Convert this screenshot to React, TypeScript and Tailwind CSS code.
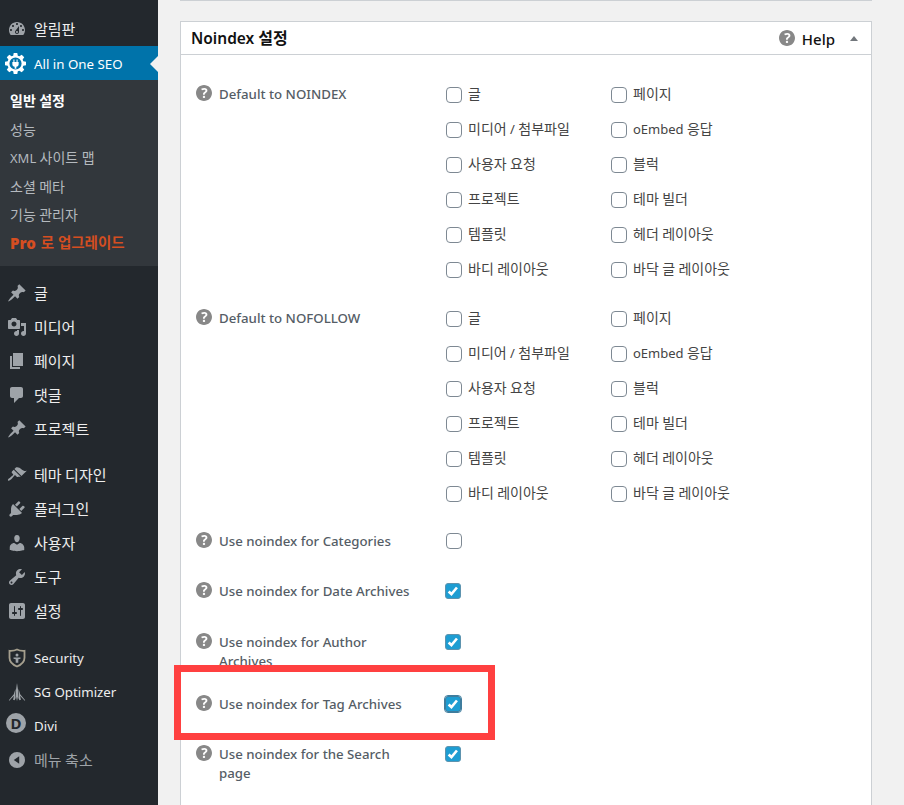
const font = "[font-family:'Noto_Sans','Noto_Sans_CJK_KR',sans-serif]";

const icons: Record<string, string> = {
  dashboard:
    "M3.76 16h12.48c1.1-1.37 1.76-3.11 1.76-5 0-4.42-3.58-8-8-8s-8 3.58-8 8c0 1.89.66 3.63 1.76 5zM10 4c.55 0 1 .45 1 1s-.45 1-1 1-1-.45-1-1 .45-1 1-1zM6 6c.55 0 1 .45 1 1s-.45 1-1 1-1-.45-1-1 .45-1 1-1zm8 0c.55 0 1 .45 1 1s-.45 1-1 1-1-.45-1-1 .45-1 1-1zm-5.37 5.55L12 7v6c0 1.1-.9 2-2 2s-2-.9-2-2c0-.57.24-1.08.63-1.45zM4 10c.55 0 1 .45 1 1s-.45 1-1 1-1-.45-1-1 .45-1 1-1zm12 0c.55 0 1 .45 1 1s-.45 1-1 1-1-.45-1-1 .45-1 1-1zm-5 3c0-.55-.45-1-1-1s-1 .45-1 1 .45 1 1 1 1-.45 1-1z",
  pin: "M10.44 3.02l1.82-1.82 6.36 6.35-1.83 1.82c-1.05-.68-2.48-.57-3.41.36l-.75.75c-.92.93-1.04 2.35-.35 3.41l-1.83 1.82-2.41-2.41-2.8 2.79c-.42.42-3.38 2.71-3.8 2.29s1.86-3.39 2.28-3.81l2.79-2.79L4.1 9.36l1.83-1.82c1.05.69 2.48.57 3.4-.36l.75-.75c.93-.92 1.05-2.35.36-3.41z",
  media:
    "M13 11V4c0-.55-.45-1-1-1h-1.67L9 1H5L3.67 3H2c-.55 0-1 .45-1 1v7c0 .55.45 1 1 1h10c.55 0 1-.45 1-1zM7 4.5c1.38 0 2.5 1.12 2.5 2.5S8.38 9.5 7 9.5 4.5 8.38 4.5 7 5.62 4.5 7 4.5zM14 6h5v10.5c0 1.38-1.12 2.5-2.5 2.5S14 17.88 14 16.5s1.12-2.5 2.5-2.5c.17 0 .34.02.5.05V9h-3V6zm-4 8.05V13h2v3.5c0 1.38-1.12 2.5-2.5 2.5S7 17.88 7 16.5 8.12 14 9.5 14c.17 0 .34.02.5.05z",
  page: "M6 15V2h10v13H6zm-1 1h8v2H3V5h2v11z",
  comments:
    "M5 2h9c1.1 0 2 .9 2 2v7c0 1.1-.9 2-2 2h-2l-5 5v-5H5c-1.1 0-2-.9-2-2V4c0-1.1.9-2 2-2z",
  brush:
    "M14.48 11.06L7.41 3.99l1.5-1.5c.5-.56 2.3-.47 3.51.32 1.21.8 1.43 1.28 2.91 2.1 1.18.64 2.45 1.26 4.45.85zm-.71.71L6.7 4.7 4.93 6.47c-.39.39-.39 1.02 0 1.41l1.06 1.06c.39.39.39 1.03 0 1.42-.6.6-1.43 1.11-2.21 1.69-.35.26-.7.53-1.01.84C1.43 13.23.4 14.84 1.1 15.54c.71.7 2.31-.33 3.65-1.67.31-.31.58-.66.85-1.02.57-.78 1.08-1.61 1.69-2.21.39-.39 1.02-.39 1.41 0l1.06 1.06c.39.39 1.02.39 1.41 0z",
  plugin:
    "M13.11 4.36L9.87 7.6 8 5.73l3.24-3.24c.35-.34 1.05-.2 1.56.32.52.51.66 1.21.31 1.55zm-8 1.77l.91-1.12 9.01 9.01-1.19.84c-.71.71-2.63 1.16-3.82 1.16H6.14L4.9 17.26c-.59.59-1.54.59-2.12 0-.59-.58-.59-1.53 0-2.12l1.24-1.24v-3.88c0-1.13.4-3.19 1.09-3.89zm7.26 3.97l3.24-3.24c.34-.35 1.04-.21 1.55.31.52.51.66 1.21.31 1.55l-3.24 3.25z",
  users:
    "M10 9.25c-2.27 0-2.73-3.44-2.73-3.44C7 4.02 7.82 2 9.97 2c2.16 0 2.98 2.02 2.71 3.81 0 0-.41 3.44-2.68 3.44zm0 2.57L12.72 10c2.39 0 4.52 2.33 4.52 4.53v2.49s-3.65 1.13-7.24 1.13c-3.65 0-7.24-1.13-7.24-1.13v-2.49c0-2.25 1.94-4.48 4.47-4.48z",
  tools:
    "M16.68 9.77c-1.34 1.34-3.3 1.67-4.95.99l-5.41 6.52c-.99.99-2.59.99-3.58 0s-.99-2.59 0-3.57l6.52-5.42c-.68-1.65-.35-3.61.99-4.95 1.28-1.28 3.12-1.62 4.72-1.06l-2.89 2.89 2.82 2.82 2.86-2.87c.53 1.58.18 3.39-1.08 4.65zM3.81 16.21c.4.39 1.04.39 1.43 0 .4-.4.4-1.04 0-1.43-.39-.4-1.03-.4-1.43 0-.39.39-.39 1.03 0 1.43z",
  settings:
    "M18 16V4c0-1.1-.9-2-2-2H4c-1.1 0-2 .9-2 2v12c0 1.1.9 2 2 2h12c1.1 0 2-.9 2-2zM8 11h1c.55 0 1 .45 1 1s-.45 1-1 1H8v1.5c0 .28-.22.5-.5.5s-.5-.22-.5-.5V13H6c-.55 0-1-.45-1-1s.45-1 1-1h1V5.5c0-.28.22-.5.5-.5s.5.22.5.5V11zm5-2h-1c-.55 0-1-.45-1-1s.45-1 1-1h1V5.5c0-.28.22-.5.5-.5s.5.22.5.5V7h1c.55 0 1 .45 1 1s-.45 1-1 1h-1v5.5c0 .28-.22.5-.5.5s-.5-.22-.5-.5V9z",
  collapse: "M10 2a8 8 0 110 16 8 8 0 010-16zm2.200 4.200L6.800 10l5.400 3.800z",
  help: "M17 10c0-3.87-3.14-7-7-7-3.87 0-7 3.13-7 7s3.13 7 7 7c3.86 0 7-3.13 7-7zm-6.3 1.48H9.14v-.43c0-.38.08-.7.24-.98s.46-.57.88-.89c.41-.29.68-.53.81-.71.14-.18.2-.39.2-.62 0-.25-.09-.44-.28-.58-.19-.13-.45-.19-.79-.19-.58 0-1.25.19-2 .57l-.64-1.28c.87-.49 1.8-.74 2.77-.74.81 0 1.45.2 1.92.58.48.39.71.91.71 1.55 0 .43-.09.8-.29 1.11-.19.32-.57.67-1.11 1.06-.38.28-.61.49-.71.63-.1.15-.15.34-.15.57v.35zm-1.47 2.74c-.18-.17-.27-.42-.27-.73 0-.33.08-.58.26-.75s.43-.25.77-.25c.32 0 .57.09.75.26s.27.42.27.74c0 .3-.09.55-.27.72-.18.18-.43.27-.75.27-.33 0-.58-.09-.76-.26z",
};

// Hangul runs get their own size, they came out narrower than the latin next to them
function Mixed({ text, ko }: { text: string; ko: string }) {
  return (
    <span>
      {text.split(/([가-힣]+)/).map((part, i) =>
        /[가-힣]/.test(part) ? (
          <span key={i} className={ko}>
            {part}
          </span>
        ) : (
          part
        ),
      )}
    </span>
  );
}

function MenuIcon({ name }: { name: string }) {
  return (
    <svg viewBox="0 0 20 20" className="h-5 w-5 shrink-0 fill-[#9ea3a8]" aria-hidden="true">
      <path fillRule="evenodd" d={icons[name]} />
    </svg>
  );
}

function GearIcon() {
  return (
    <svg viewBox="0 0 20 20" className="h-[21px] w-[21px] shrink-0 fill-white" aria-hidden="true">
      <path
        fillRule="evenodd"
        d="M8.300 0h3.400l.5 2.600 1.500.6 2.200-1.500 2.400 2.400-1.500 2.200.6 1.500 2.600.5v3.400l-2.600.5-.6 1.500 1.500 2.200-2.400 2.400-2.200-1.500-1.500.6-.5 2.600H8.300l-.5-2.600-1.500-.6-2.200 1.500-2.400-2.400 1.500-2.200-.6-1.500L0 11.700V8.300l2.600-.5.6-1.500-1.500-2.200 2.400-2.400 2.200 1.500 1.500-.6zM10 4.200a5.800 5.800 0 100 11.600 5.800 5.800 0 000-11.600zM8 6.200h1v2.300h2V6.200h1v2.300h1v2.200c0 1.300-.9 2.300-2.200 2.500V15H9.200v-1.800C7.900 13 7 12 7 10.700V8.500h1z"
      />
    </svg>
  );
}

function ShieldIcon() {
  return (
    <svg viewBox="0 0 20 20" className="h-5 w-5 shrink-0" aria-hidden="true">
      <path
        d="M10 1.500c2 1.100 4.500 1.500 7.500 1.300v6.900c0 4-3 6.900-7.500 8.800-4.500-1.900-7.500-4.800-7.500-8.800V2.800c3 .2 5.500-.2 7.500-1.300z"
        className="fill-none stroke-[#a59f8e] stroke-[1.800]"
      />
      <path
        fillRule="evenodd"
        className="fill-[#9ea3a8]"
        d="M10 5.500a1.500 1.500 0 110 3 1.500 1.500 0 010-3zM6.500 9.500h7v1.200l-2.200.6v3.400H8.700v-3.400l-2.200-.6z"
      />
    </svg>
  );
}

function SgIcon() {
  return (
    <svg viewBox="-1 0 22 20" className="h-5 w-5 shrink-0 fill-[#9ea3a8]" aria-hidden="true">
      <path d="M10 0l1.300 9-.2 6-1.100 5-1.100-5-.2-6z" />
      <path d="M8.300 6.500l-.2 5.500.4 4.500-1.200 2.500-1.600-.6 1-4.400L1.500 19.500 1 19l5.500-6.500z" />
      <path d="M11.700 6.500l.2 5.500-.4 4.500 1.200 2.500 1.600-.6-1-4.400 5.200 5.500.5-.5-5.500-6.500z" />
    </svg>
  );
}

function DiviIcon() {
  return (
    <span className="mt-[-6px] mr-px -ml-px flex h-5 w-5 shrink-0 items-center justify-center rounded-full bg-[#9ea3a8] text-[15px] leading-none font-bold text-[#23282d]">
      D
    </span>
  );
}

function Item({ icon, label, muted }: { icon: string; label: string; muted?: boolean }) {
  const latin = !/[가-힣]/.test(label);
  return (
    <li className={`flex h-[34px] items-center gap-[7px] pl-[7px] text-[13.3px] ${muted ? "text-[#9ea3a8]" : "text-[#eeeeee]"}`}>
      {icon === "divi" ? <DiviIcon /> : icon === "shield" ? <ShieldIcon /> : icon === "sg" ? <SgIcon /> : <MenuIcon name={icon} />}
      <span className={latin ? "mt-[2px]" : ""}>
        <Mixed text={label} ko="text-[15px]" />
      </span>
    </li>
  );
}

function Sidebar() {
  const subItems = ["성능", "XML 사이트 맵", "소셜 메타", "기능 관리자"];
  return (
    <nav aria-label="Primary" className="w-[158px] shrink-0 bg-[#23282d] pt-3">
      <ul>
        <Item icon="dashboard" label="알림판" />
        <li className="relative flex h-[34px] items-center gap-[7px] bg-[#0073aa] pl-[5px] text-[13.3px] text-white">
          <GearIcon />
          <span className="mt-[4px] pl-[1px]">All in One SEO</span>
          <span className="absolute top-[10px] right-0 h-0 w-0 border-y-[8px] border-r-[8px] border-y-transparent border-r-[#f1f1f1]" />
        </li>
      </ul>
      <ul className="flex h-[186px] flex-col bg-[#32373c] pt-[7px] pl-[10px] text-[13px]">
        <li className="flex h-[28.4px] items-center font-bold text-white">
          <Mixed text="일반 설정" ko="text-[14px]" />
        </li>
        {subItems.map((label) => (
          <li key={label} className="flex h-[28.4px] items-center text-[#b4b9be]">
            <Mixed text={label} ko="text-[14px]" />
          </li>
        ))}
        <li className="flex h-[28.4px] items-center text-[14.5px] font-bold text-[#d54e21]">
          <span className="text-[15px] font-black">Pro</span>
          <span className="ml-[5px]">로 업그레이드</span>
        </li>
      </ul>
      <ul className="mt-[10px]">
        <Item icon="pin" label="글" />
        <Item icon="media" label="미디어" />
        <Item icon="page" label="페이지" />
        <Item icon="comments" label="댓글" />
        <Item icon="pin" label="프로젝트" />
      </ul>
      <ul className="mt-3">
        <Item icon="brush" label="테마 디자인" />
        <Item icon="plugin" label="플러그인" />
        <Item icon="users" label="사용자" />
        <Item icon="tools" label="도구" />
        <Item icon="settings" label="설정" />
      </ul>
      <ul className="mt-[13px]">
        <Item icon="shield" label="Security" />
        <Item icon="sg" label="SG Optimizer" />
        <Item icon="divi" label="Divi" />
        <Item icon="collapse" label="메뉴 축소" muted />
      </ul>
    </nav>
  );
}

function HelpIcon() {
  return (
    <svg viewBox="3 3 14 14" className="h-4 w-4 shrink-0 fill-[#888888]" aria-hidden="true">
      <path fillRule="evenodd" d={icons.help} />
    </svg>
  );
}

function Checkbox({ checked, focused }: { checked?: boolean; focused?: boolean }) {
  if (checked) {
    return (
      <span
        className={`-ml-px flex h-4 w-4 shrink-0 items-center justify-center rounded-[3px] border bg-[#1e9dd2] ${focused ? "border-[#3f7d9e] outline outline-[#3f7d9e]" : "border-[#5d93ae]"}`}
      >
        <svg viewBox="0 0 16 16" className="h-[14px] w-[14px] fill-none stroke-white stroke-[3]" aria-hidden="true">
          <path d="M3 8.500l3.200 3L12.500 4" />
        </svg>
      </span>
    );
  }
  return <span className="block h-4 w-4 shrink-0 rounded-[4px] border border-[#7e8993] bg-white" />;
}

const postTypes = [
  ["글", "페이지"],
  ["미디어 / 첨부파일", "oEmbed 응답"],
  ["사용자 요청", "블럭"],
  ["프로젝트", "테마 빌더"],
  ["템플릿", "헤더 레이아웃"],
  ["바디 레이아웃", "바닥 글 레이아웃"],
];

function Label({ text }: { text: string }) {
  return (
    <div className="flex w-[250px] shrink-0 items-start gap-[7px]">
      <HelpIcon />
      <span className="w-[196px] text-[13.25px] leading-[19px] font-medium text-[#555d66]">{text}</span>
    </div>
  );
}

function TypeGroup({ title }: { title: string }) {
  return (
    <div className="flex">
      <div className="pt-[8px]">
        <Label text={title} />
      </div>
      <div className="grid w-[330px] grid-cols-[165px_165px] text-[13px] text-[#444444]">
        {postTypes.flat().map((label) => (
          <div key={label} className="flex h-[35px] items-center gap-[6px]">
            <Checkbox />
            <span className="-mt-px">
              <Mixed text={label} ko="text-[14px]" />
            </span>
          </div>
        ))}
      </div>
    </div>
  );
}

function ToggleRow({ text, checked, height, focused }: { text: string; checked?: boolean; height: string; focused?: boolean }) {
  return (
    <div className={`flex ${height}`}>
      <Label text={text} />
      <div className="pt-[1px]">
        <Checkbox checked={checked} focused={focused} />
      </div>
    </div>
  );
}

function Panel() {
  return (
    <section className="mt-[20px] h-[900px] border border-[#ccd0d4] bg-white">
      <header className="flex h-[33px] items-center justify-between border-b border-[#ccd0d4] pr-[13px] pl-[10px]">
        <h2 className="text-[15.5px] font-semibold text-[#111111]">
          <Mixed text="Noindex 설정" ko="text-[16px]" />
        </h2>
        <div className="flex items-center">
          <HelpIcon />
          <span className="mt-[2px] ml-[7px] text-[15px] font-medium text-[#111111]">Help</span>
          <span className="ml-[15px] h-0 w-0 border-x-[4px] border-b-[5px] border-x-transparent border-b-[#72777c]" />
        </div>
      </header>
      <div className="px-[15px] pt-[22px]">
        <TypeGroup title="Default to NOINDEX" />
        <div className="mt-[14px]">
          <TypeGroup title="Default to NOFOLLOW" />
        </div>
        <div className="mt-[21px]">
          <ToggleRow text="Use noindex for Categories" height="h-[50px]" />
          <ToggleRow text="Use noindex for Date Archives" height="h-[51px]" checked />
          <ToggleRow text="Use noindex for Author Archives" height="h-[62px]" checked />
          <ToggleRow text="Use noindex for Tag Archives" height="h-[50px]" checked focused />
          <ToggleRow text="Use noindex for the Search page" height="h-[50px]" checked />
        </div>
      </div>
    </section>
  );
}

export default function App() {
  return (
    <div className={`${font} relative flex h-[805px] w-[904px] overflow-hidden bg-[#f1f1f1]`}>
      <Sidebar />
      <main className="flex-1 pr-[32px] pl-[22px]">
        <div className="h-px bg-[#ccd0d4]" />
        <Panel />
      </main>
      <div className="absolute top-[665px] left-[174px] h-[75px] w-[321px] border-[7px] border-[#ff4040]" />
    </div>
  );
}
